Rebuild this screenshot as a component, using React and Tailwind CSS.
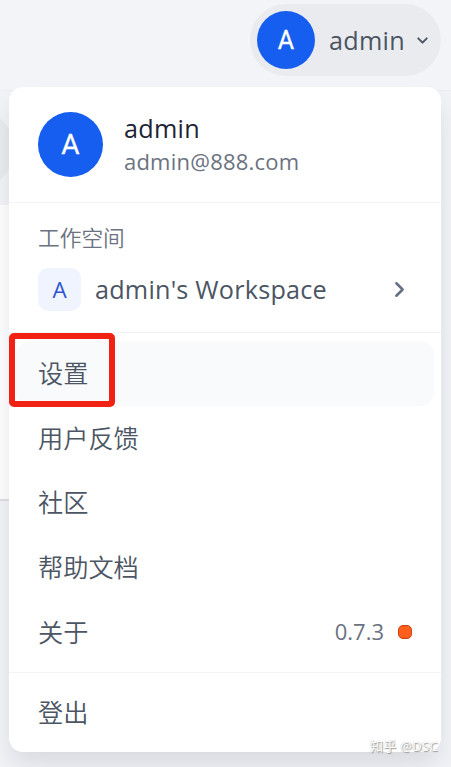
import { ChevronDown, ChevronRight } from "lucide-react";

const items = ["设置", "用户反馈", "社区", "帮助文档"];

function MenuItem({ label, active, children }) {
  return (
    <div
      className={`flex h-[64.6px] items-center justify-between rounded-[14px] pr-[22px] pl-[22px] text-[25.2px] text-[#475467] ${active ? "bg-[#f9fafb]" : ""}`}
    >
      <span className="pb-px font-['Noto_Sans_CJK_SC',sans-serif] leading-none font-[350] whitespace-nowrap text-[#4b5563]">{label}</span>
      {children}
    </div>
  );
}

export default function App() {
  return (
    <div className="relative h-[767px] w-[451px] overflow-hidden bg-[#f1f2f6] font-['Open_Sans','Noto_Sans_CJK_SC',sans-serif]">
      <div className="absolute inset-x-0 top-0 h-[91px] border-b border-[#ebecf0] bg-[#f3f4f8]" />
      <div className="absolute top-[107px] -left-[74px] h-[84px] w-[88px] rounded-full bg-[#e9eaed]" />
      <div className="absolute top-[205px] -left-[20px] h-[296px] w-[40px] border-b-2 border-[#dcdde2] bg-[#fdfdfe]" />

      <header className="relative flex justify-end pt-1 pr-[10px]">
        <button className="flex h-[72px] w-[191px] items-center rounded-full bg-[#eaebee] pl-[7px]">
          <span className="flex size-[58px] items-center justify-center rounded-full bg-[#155eef] pt-px font-[Roboto] text-[25px] text-white [-webkit-text-stroke:0.3px_white]">A</span>
          <span className="ml-[14px] w-[77px] pt-[2px] text-left text-[25.2px] leading-none tracking-[0.3px] text-[#4b5563]">admin</span>
          <ChevronDown className="ml-[8px] size-[17px] text-[#4b5563]" strokeWidth={2.8} />
        </button>
      </header>

      <main className="relative mt-[11px] ml-[9px] h-[665px] w-[432px] rounded-[14px] bg-white shadow-[0_14px_24px_-4px_rgba(16,24,40,0.12)]">
        <section className="flex h-[116px] items-center border-b border-[#f2f4f7] pl-[29px]">
          <div className="flex size-[65px] items-center justify-center rounded-full bg-[#155eef] font-[Roboto] text-[28px] text-white [-webkit-text-stroke:0.3px_white]">A</div>
          <div className="ml-[21px] flex flex-col">
            <span className="h-[33px] text-[25.2px] leading-[32px] tracking-[0.3px] text-[#1d2433]">admin</span>
            <span className="h-[33px] text-[22px] leading-[32px] tracking-[0.22px] text-[#6b7280]">admin@888.com</span>
          </div>
        </section>

        <section className="h-[130px] border-b border-[#f2f4f7] pt-[18px] pr-[29px] pl-[29px]">
          <div className="font-['Noto_Sans_CJK_SC',sans-serif] text-[21.7px] leading-[32px] font-[350] text-[#6b7280]">工作空间</div>
          <div className="mt-[15px] flex h-[43px] items-center">
            <span className="flex size-[43px] items-center justify-center rounded-[10px] bg-[#eff4ff] text-[22.5px] text-[#2f54cf]">A</span>
            <span className="ml-[14px] flex-1 text-[25.2px] leading-none tracking-[0.22px] whitespace-nowrap text-[#4b5563]">admin's Workspace</span>
            <ChevronRight className="size-[25px] text-[#667085]" strokeWidth={2.4} />
          </div>
        </section>

        <nav className="h-[340px] border-b border-[#f2f4f7] px-[7px] pt-[8px]">
          {items.map((label, i) => (
            <MenuItem key={label} label={label} active={i === 0} />
          ))}
          <MenuItem label="关于">
            <span className="flex items-center text-[22px] text-[#6b7280]">
              0.7.3
              <i className="ml-[14px] size-[14px] rounded-[5px] border border-[#c9430f] bg-[#ff5f1c]" />
            </span>
          </MenuItem>
        </nav>
        <div className="px-[7px] pt-[7px]">
          <MenuItem label="登出" />
        </div>
      </main>

      <div className="absolute top-[333px] left-[9px] h-[74px] w-[106px] rounded-[5px] border-[6px] border-[#f12114]" />
      <div className="absolute top-[738px] left-[370px] text-[13px] leading-[16px] tracking-[0.3px] whitespace-nowrap text-white [text-shadow:1px_1px_1px_#999,0_0_1px_#aaa]">知乎 @DSC</div>
    </div>
  );
}
